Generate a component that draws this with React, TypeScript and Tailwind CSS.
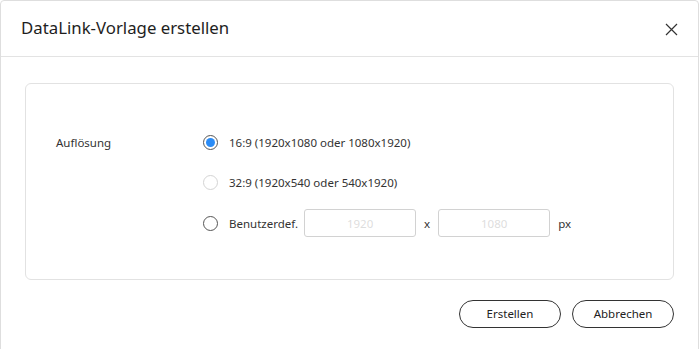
function Radio({ state }: { state: 'checked' | 'off' | 'disabled' }) {
  if (state === 'checked') {
    return (
      <span className="flex h-[15px] w-[15px] shrink-0 items-center justify-center rounded-full border border-[#555]">
        <span className="h-[9px] w-[9px] rounded-full bg-[#2b8cf6]" />
      </span>
    );
  }
  return (
    <span
      className={`h-[15px] w-[15px] shrink-0 rounded-full border ${
        state === 'disabled' ? 'border-[#d4d4d4]' : 'border-[#555]'
      }`}
    />
  );
}

export default function App() {
  return (
    <div className="h-[349px] w-[700px] overflow-hidden bg-white font-['Noto_Sans',sans-serif] text-[#222]">
      <div className="h-[400px] w-[699px] rounded-[4px] border border-[#dedede] bg-white">
        {/* header */}
        <div className="flex h-[56px] items-center justify-between border-b border-[#e3e3e3] pl-[20px] pr-[20px]">
          <h1 className="text-[16.8px] leading-none text-[#1e1e1e]">DataLink-Vorlage erstellen</h1>
          <svg width="13" height="13" viewBox="0 0 13 13" className="mt-[1px]">
            <path d="M1 1L12 12M12 1L1 12" stroke="#333" strokeWidth="1.2" />
          </svg>
        </div>

        {/* body */}
        <div className="px-[24px] pt-[26px]">
          <div className="flex h-[197px] rounded-[6px] border border-[#e2e2e2] pl-[30px] pt-[50px]">
            <div className="w-[147px] text-[11.5px] leading-[17px] text-[#333]">Auflösung</div>
            <div className="flex flex-col gap-[23px] text-[11.5px] leading-[17px] text-[#333]">
              <label className="flex items-center gap-[11px]">
                <Radio state="checked" />
                <span>16:9 (1920x1080 oder 1080x1920)</span>
              </label>
              <label className="flex items-center gap-[11px]">
                <Radio state="disabled" />
                <span>32:9 (1920x540 oder 540x1920)</span>
              </label>
              <label className="-mt-[5px] flex items-center">
                <Radio state="off" />
                <span className="ml-[11px]">Benutzerdef.</span>
                <input
                  className="ml-[6px] h-[28px] w-[112px] rounded-[3px] border border-[#d2d2d2] text-center text-[11.5px] text-[#bbb] outline-none"
                  placeholder="1920"
                  disabled
                />
                <span className="mx-[8px]">x</span>
                <input
                  className="h-[28px] w-[112px] rounded-[3px] border border-[#d2d2d2] text-center text-[11.5px] text-[#bbb] outline-none"
                  placeholder="1080"
                  disabled
                />
                <span className="ml-[8px]">px</span>
              </label>
            </div>
          </div>
        </div>

        {/* footer */}
        <div className="flex justify-end gap-[11px] pr-[24px] pt-[20px]">
          <button className="h-[28px] w-[102px] rounded-full border border-[#333] text-[11.5px] text-[#222]">
            Erstellen
          </button>
          <button className="h-[28px] w-[102px] rounded-full border border-[#333] text-[11.5px] text-[#222]">
            Abbrechen
          </button>
        </div>
      </div>
    </div>
  );
}
